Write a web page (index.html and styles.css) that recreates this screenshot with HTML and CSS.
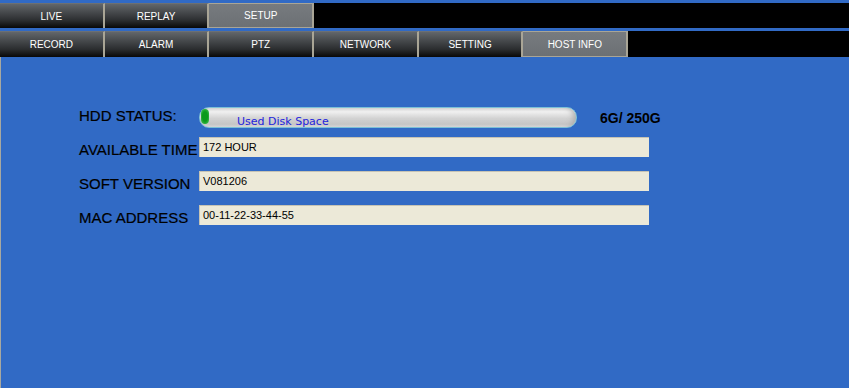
FILE: index.html
```html
<!DOCTYPE html>
<html>
<head>
<meta charset="utf-8">
<link rel="stylesheet" href="styles.css">
</head>
<body>
<div class="header">
  <div class="tabrow row1">
    <div class="tab">LIVE</div>
    <div class="tab">REPLAY</div>
    <div class="tab active">SETUP</div>
  </div>
  <div class="tabrow row2">
    <div class="tab">RECORD</div>
    <div class="tab">ALARM</div>
    <div class="tab">PTZ</div>
    <div class="tab">NETWORK</div>
    <div class="tab">SETTING</div>
    <div class="tab active">HOST INFO</div>
  </div>
</div>
<div class="content">
  <div class="row hdd">
    <div class="label">HDD STATUS:</div>
    <div class="bar">
      <span class="knob"></span>
      <span class="bartext">Used Disk Space</span>
    </div>
    <div class="size">6G/ 250G</div>
  </div>
  <div class="row field first">
    <div class="label">AVAILABLE TIME</div>
    <div class="box">172 HOUR</div>
  </div>
  <div class="row field">
    <div class="label">SOFT VERSION</div>
    <div class="box">V081206</div>
  </div>
  <div class="row field">
    <div class="label">MAC ADDRESS</div>
    <div class="box">00-11-22-33-44-55</div>
  </div>
</div>
</body>
</html>
```
FILE: styles.css
```css
html, body {
  margin: 0;
  padding: 0;
  background: #316ac5;
  width: 849px;
  height: 388px;
  overflow: hidden;
}

.header {
  padding-top: 3px;
}

.tabrow {
  display: flex;
  background: #000;
}

.row1 {
  height: 25px;
  margin-bottom: 3px;
}

.row2 {
  height: 26px;
}

.tab {
  box-sizing: border-box;
  width: 104.7px;
  flex: none;
  border-right: 2px solid #a9a596;
  border-top: 1px solid #6c7074;
  background: linear-gradient(#62666a, #2a2c2e 70%, #080808);
  color: #fff;
  font-family: "Liberation Sans", Arial, sans-serif;
  font-size: 10px;
  display: flex;
  align-items: center;
  justify-content: center;
}

.tab.active {
  background: linear-gradient(#777b7f, #6c7074);
  border-top: 1px solid #a9a596;
  border-bottom: 1px solid #a9a596;
}

.content {
  border-left: 1px solid #a8a8a0;
  height: 331px;
  box-sizing: border-box;
  padding: 50px 0 0 78px;
  font-family: "Liberation Sans", Arial, sans-serif;
}

.row {
  display: flex;
  align-items: flex-start;
}

.label {
  width: 120px;
  flex: none;
  font-size: 15px;
  line-height: 17px;
  color: #000;
  white-space: nowrap;
  -webkit-text-stroke: 0.2px #000;
}

.bar {
  position: relative;
  box-sizing: border-box;
  width: 378px;
  height: 21px;
  border: 1px solid #7cc0d6;
  border-radius: 10px;
  background: linear-gradient(#d6d6d6, #f0f0f0 20%, #d2d2d2 55%, #c6c6c6 85%, #dadada);
  box-shadow: inset -6px 0 6px -4px #a8a8a8;
}

.knob {
  position: absolute;
  left: 1px;
  top: 1px;
  width: 8px;
  height: 15px;
  border-radius: 4px;
  background: radial-gradient(ellipse at 50% 50%, #0c9a1c 45%, #2cb03c 70%, #8ed89a);
}

.bartext {
  position: absolute;
  left: 37px;
  top: 7px;
  font-family: "DejaVu Sans", Verdana, sans-serif;
  font-size: 11px;
  line-height: 13px;
  color: #2323dd;
  white-space: nowrap;
}

.size {
  margin-left: 23px;
  margin-top: 3px;
  font-weight: bold;
  font-size: 14px;
  line-height: 16px;
  color: #000;
}

.field {
  height: 20px;
  margin-top: 14px;
}

.field.first {
  margin-top: 9px;
}

.field .label {
  margin-top: 4px;
}

.box {
  position: relative;
  box-sizing: border-box;
  width: 450px;
  height: 20px;
  background: #ece9d8;
  border-top: 1px solid #c6c3b4;
  border-left: 1px solid #c6c3b4;
  padding-left: 3px;
  font-size: 11px;
  line-height: 19px;
  color: #000;
  white-space: nowrap;
}
```
